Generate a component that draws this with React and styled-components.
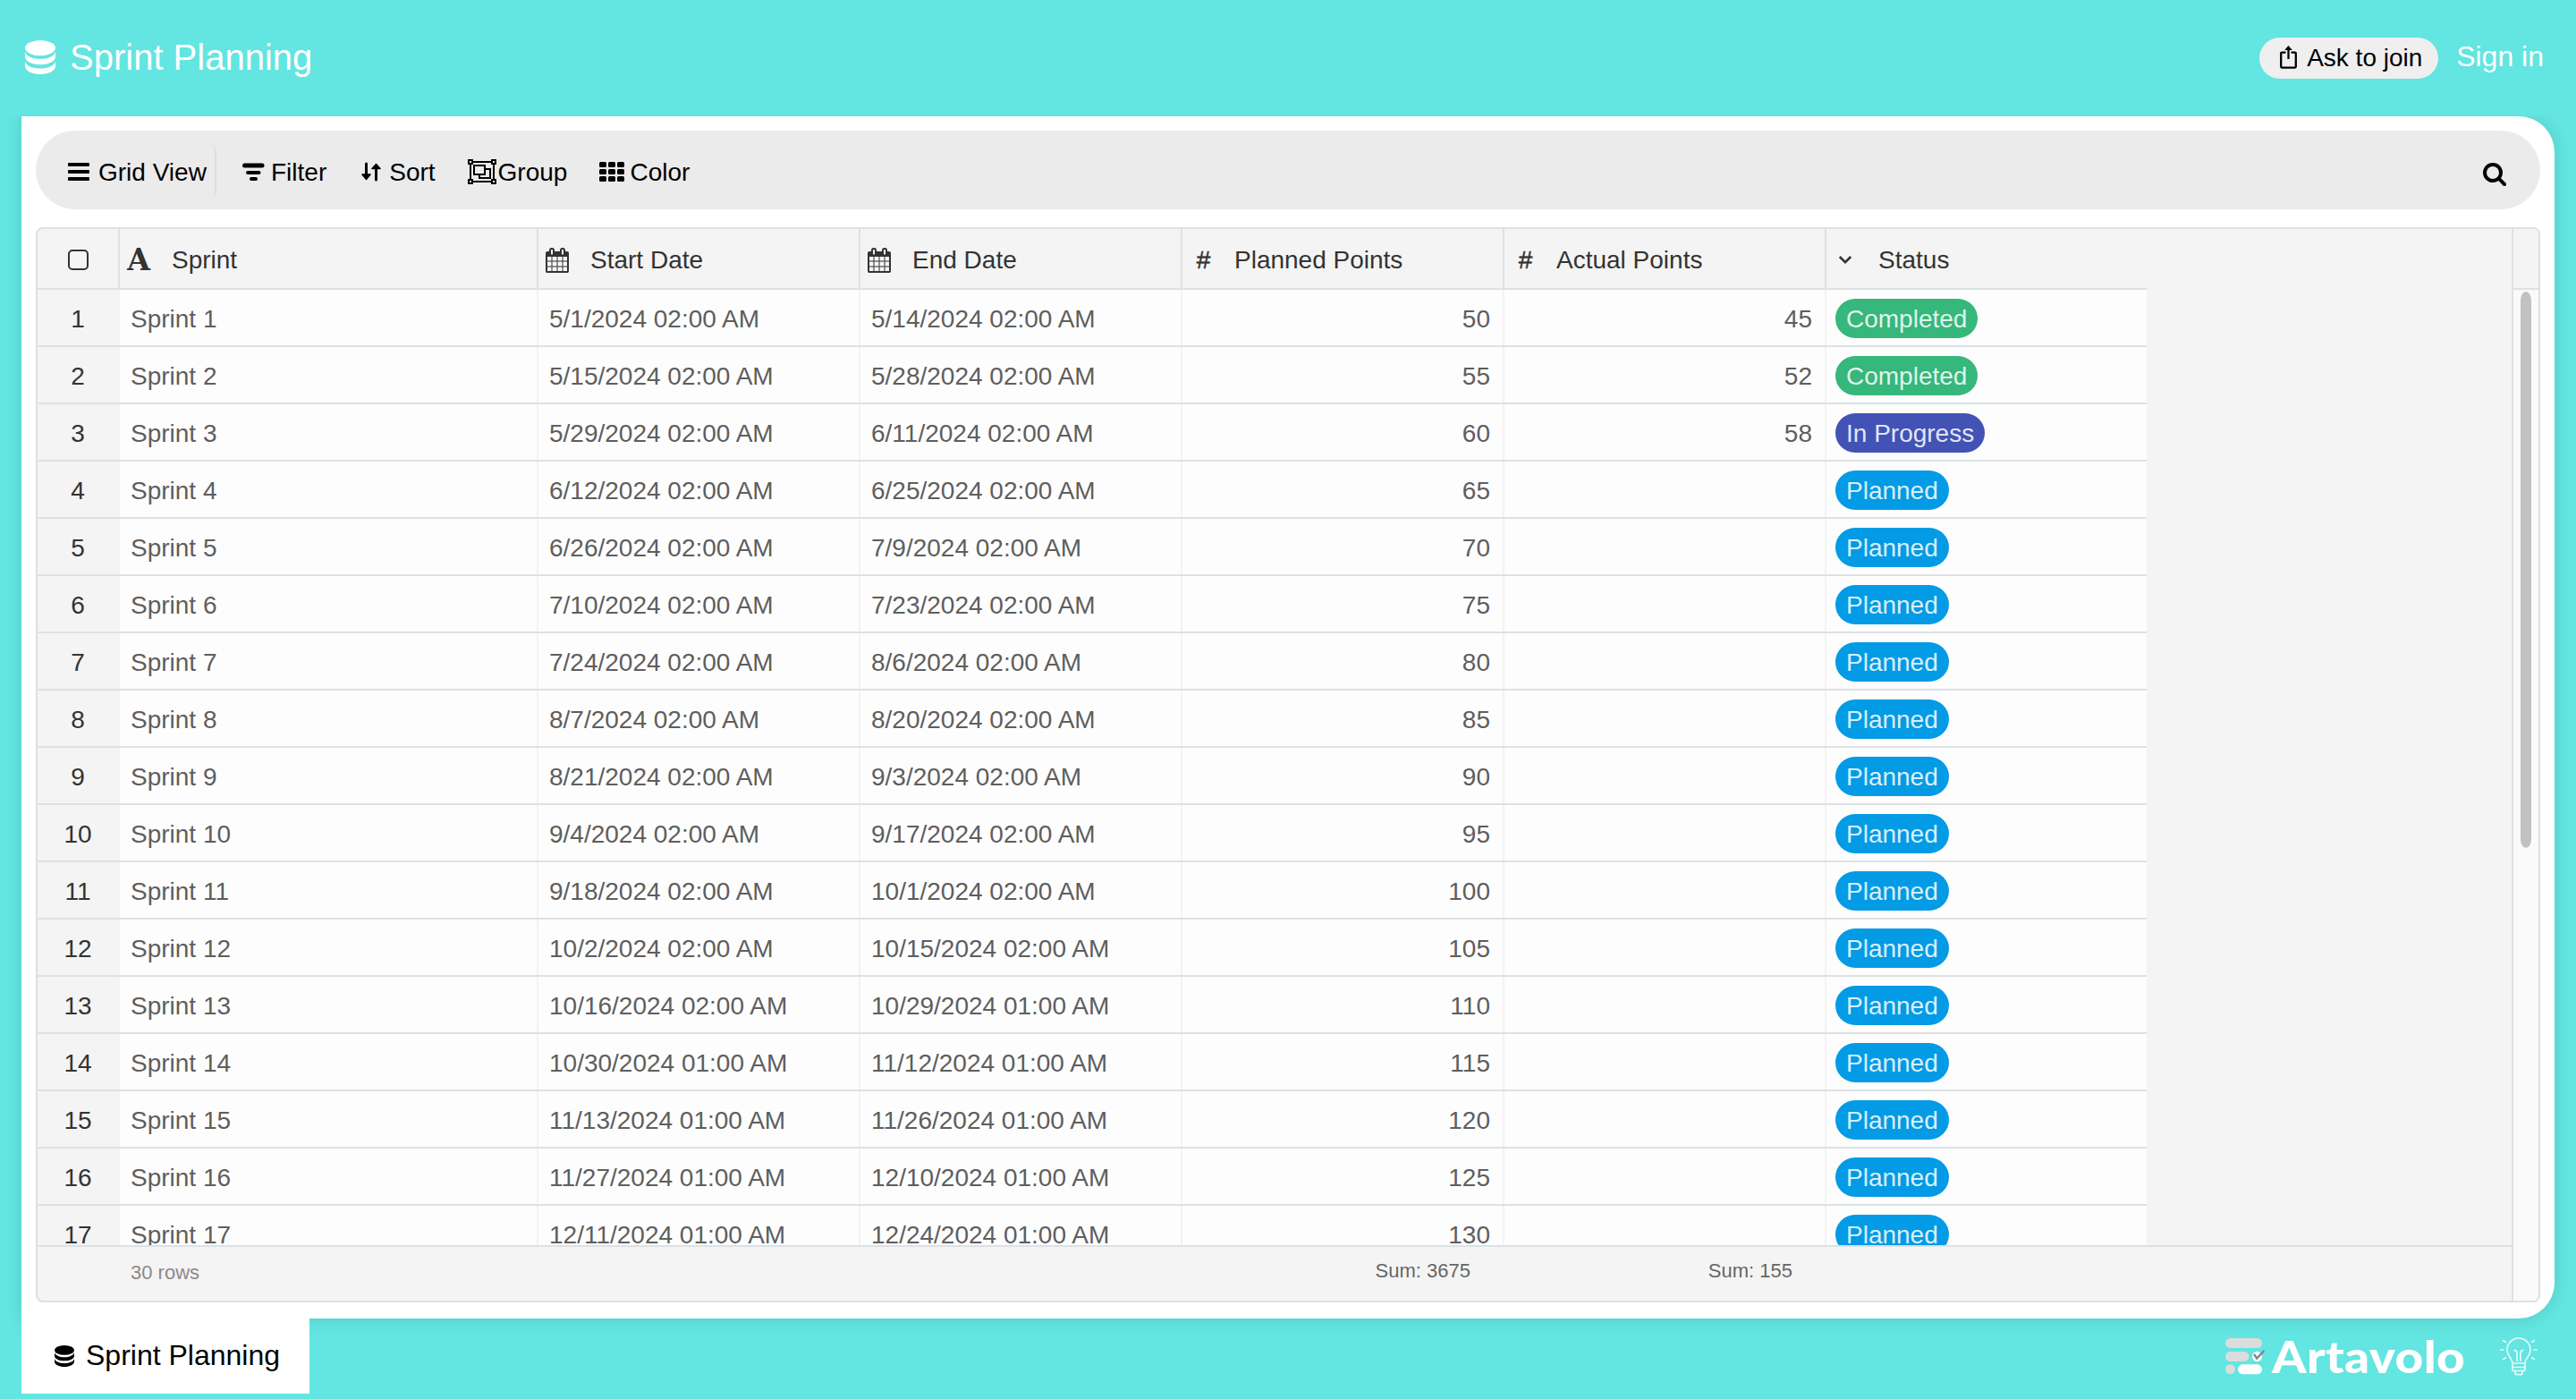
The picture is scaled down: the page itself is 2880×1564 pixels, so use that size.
import React from 'react'

import styled, { createGlobalStyle } from 'styled-components'

const GlobalStyle = createGlobalStyle`
    * {
        box-sizing: border-box;
    }

    body {
        margin: 0;
        overflow: hidden;
        background-color: #63E5E1;
        font-family: "Liberation Sans", Arial, sans-serif;
        font-size: 28px;
    }

    svg {
        display: block;
        flex: none;
    }
`

const StyledPage = styled.div`
    width: 100vw;
    height: 100vh;
    display: flex;
    flex-direction: column;
    background-color: #63E5E1;
`

const StyledHeader = styled.header`
    height: 130px;
    flex: none;
    display: flex;
    align-items: center;
    padding: 0 36px 3px 28px;
    color: #FFF;
    background-color: #63E5E1;
    z-index: 1;
`

const StyledTitle = styled.h1`
    margin: 0 auto 0 16px;
    font-size: 40px;
    font-weight: normal;
    line-height: 46px;
`

const StyledJoinButton = styled.button`
    width: 200px;
    height: 46px;
    margin: 3px 20px 0 0;
    padding: 0 0 0 22px;
    display: flex;
    align-items: center;
    gap: 10px;
    border: 0;
    border-radius: 23px;
    background-color: #EFEFEF;
    color: #000;
    font: inherit;
    white-space: nowrap;
`

const StyledSignIn = styled.a`
    color: #FFF;
    font-size: 32px;
    line-height: 36px;
    padding-bottom: 1px;
`

const StyledPanel = styled.main`
    height: 1344px;
    flex: none;
    margin: 0 24px;
    padding: 16px;
    display: flex;
    flex-direction: column;
    background-color: #FFF;
    border-radius: 0 40px 40px 0;
    box-shadow: 0 0 20px rgba(0, 0, 0, 0.12);
`

const StyledToolbar = styled.div`
    height: 88px;
    flex: none;
    margin-bottom: 20px;
    padding: 4px 38px 0 36px;
    display: flex;
    align-items: center;
    border-radius: 44px;
    background-color: #EBEBEB;
`

const StyledTool = styled.div`
    display: flex;
    align-items: center;
    gap: ${props => props.$gap}px;
    margin-left: ${props => props.$left}px;
    line-height: 32px;
    white-space: nowrap;
`

const StyledViewTool = styled(StyledTool)`
    width: 166px;
    height: 60px;
    border-right: 2px solid #DFDFDF;
    border-radius: 8px;
`

const StyledToolLabel = styled.span`
    padding-top: 2px;
`

const StyledSearch = styled.div`
    margin-left: auto;
    padding-top: 6px;
`

const StyledGrid = styled.div`
    height: 1202px;
    display: flex;
    overflow: hidden;
    border: 2px solid #DCE1E5;
    border-radius: 8px;
    background-color: #F4F4F4;
`

const StyledGridMain = styled.div`
    flex: 1;
    display: flex;
    flex-direction: column;
`

const StyledColumns = styled.div`
    width: 2358px;
    display: grid;
    grid-template-columns: 92px 468px 360px 360px 360px 360px 358px;
`

const StyledHeadRow = styled(StyledColumns)`
    height: 68px;
    border-bottom: 2px solid #DCE1E5;
    color: #333;
`

const StyledHeadCell = styled.div`
    padding-top: 3px;
    display: flex;
    align-items: center;
    border-right: ${props => props.$last ? '0' : '2px solid #DCE1E5'};
    white-space: nowrap;
`

const StyledCheckAll = styled.span`
    width: 23px;
    height: 23px;
    margin: 0 auto;
    border: 2px solid #333;
    border-radius: 5px;
`

const StyledHeadIcon = styled.span`
    width: ${props => props.$hash ? 47 : 42}px;
    margin-right: ${props => props.$hash ? 11 : 16}px;
    display: flex;
    justify-content: center;
    -webkit-text-stroke: ${props => props.$hash ? '0.5px #333' : '0'};
`

const StyledTextIcon = styled.span`
    font-family: "DejaVu Serif", serif;
    font-size: 33px;
    font-weight: bold;
    line-height: 38px;
`

const StyledBody = styled.div`
    height: 1068px;
    overflow: hidden;
`

const StyledRow = styled(StyledColumns)`
    height: 64px;
    border-bottom: 2px solid #DCE1E5;
    background-color: #FDFDFD;
`

const StyledCell = styled.div`
    padding: ${props => props.$right ? '3px 14px 0' : '3px 12px 0'};
    display: flex;
    align-items: center;
    justify-content: ${props => props.$right ? 'flex-end' : 'flex-start'};
    border-right: 2px solid #F2F2F2;
    color: #5E5E5E;
    white-space: nowrap;
`

const StyledNumberCell = styled(StyledCell)`
    justify-content: center;
    background-color: #F4F4F4;
    border-right-color: #F4F4F4;
    color: #333;
`

const StyledStatusCell = styled(StyledCell)`
    padding: 1px 10px 0;
    border-right: 0;
`

const StyledPill = styled.span`
    height: 44px;
    padding: 1px 12px 0;
    line-height: 44px;
    border-radius: 22px;
    background-color: ${props => props.$color};
    color: rgba(255, 255, 255, 0.87);
`

const StyledFooter = styled(StyledColumns)`
    width: 100%;
    height: 62px;
    border-top: 2px solid #DCE1E5;
    font-size: 22px;
    line-height: 26px;
    color: #666;
`

const StyledRowCount = styled.div`
    grid-column: 2;
    padding: 16px 12px 0;
    color: #8A8A8A;
`

const StyledSum = styled.div`
    grid-column: ${props => props.$column};
    padding: 14px 38px 0 0;
    text-align: right;
`

const StyledScrollColumn = styled.div`
    width: 30px;
    border-left: 2px solid #DCE1E5;
    background-color: #FAFAFA;
`

const StyledScrollHead = styled.div`
    height: 68px;
    border-bottom: 2px solid #DCE1E5;
    background-color: #F4F4F4;
`

const StyledScrollThumb = styled.div`
    width: 12px;
    height: 622px;
    margin: 2px 8px;
    border-radius: 6px / 10px;
    background-color: #C1C1C1;
`

const StyledBottomBar = styled.footer`
    height: 90px;
    padding: 0 43px 6px 24px;
    display: flex;
    align-items: center;
    z-index: 1;
`

const StyledTab = styled.div`
    width: 322px;
    height: 84px;
    padding: 0 0 1px 37px;
    display: flex;
    align-items: center;
    gap: 13px;
    background-color: #FFF;
    color: #000;
    font-size: 32px;
    white-space: nowrap;
`

const StyledBrand = styled.div`
    margin-left: auto;
    display: flex;
    align-items: center;
    gap: 8px;
    margin-right: 40px;
    color: #FFF;
`

const StyledBrandName = styled.span`
    width: 215px;
    font-family: Lato, sans-serif;
    font-size: 50px;
    font-weight: 900;
    line-height: 50px;
    letter-spacing: 0.3px;
    white-space: nowrap;
    transform: scaleX(1.1);
    transform-origin: left;
`

const DatabaseIcon = ({ width, height }) => (
    <svg width={width} height={height} viewBox="0 0 34 38" preserveAspectRatio="none" fill="currentColor">
        <ellipse cx="17" cy="8.6" rx="17" ry="8.6" />
        <path d="M0 13C1.500 17.500 8 21 17 21S32.500 17.500 34 13V18.500C34 23.500 26.500 27.300 17 27.300S0 23.500 0 18.500Z" />
        <path d="M0 24C1.500 28.500 8 31.600 17 31.600S32.500 28.500 34 24V29C34 34 26.500 38 17 38S0 34 0 29Z" />
    </svg>
)

const ShareIcon = () => (
    <svg width="21" height="28" viewBox="0 0 21 28" fill="none" stroke="currentColor" strokeWidth="2.300">
        <path d="M7.500 7.600H3.200Q2.200 7.600 2.200 8.600V23.600Q2.200 24.600 3.200 24.600H17.800Q18.800 24.600 18.800 23.600V8.600Q18.800 7.600 17.800 7.600H13.500" />
        <path d="M10.500 3V15" />
        <path d="M6.200 5L10.500 0L14.800 5Z" fill="currentColor" stroke="none" />
    </svg>
)

const MenuIcon = () => (
    <svg width="24" height="20" viewBox="0 0 24 20">
        {[0, 8, 16].map(y => <rect key={y} y={y} width="24" height="4" rx="1" />)}
    </svg>
)

const FilterIcon = () => (
    <svg width="26" height="20" viewBox="0 0 26 20">
        <rect x="0" y="0.500" width="24.500" height="5" rx="2.500" />
        <rect x="4" y="9" width="16.500" height="4" rx="2" />
        <rect x="8" y="16" width="9" height="4" rx="2" />
    </svg>
)

const SortIcon = () => (
    <svg width="22" height="22" viewBox="0 0 22 22" fill="none" stroke="#000" strokeWidth="3" strokeLinecap="round">
        <path d="M5.500 2V15M16.500 20V7" />
        <path d="M1 14H10L5.500 19.500ZM12 7.500H21L16.500 2.500Z" fill="#000" strokeWidth="1.500" strokeLinejoin="round" />
    </svg>
)

const GroupIcon = () => (
    <svg width="32" height="28" viewBox="0 0 32 28" fill="none" stroke="#000" strokeWidth="2">
        <rect x="3" y="3" width="26" height="22" />
        <rect x="7" y="7" width="12" height="10" />
        <path d="M19 11H25V21H13V17" />
        {[1, 23].map(y => [1, 27].map(x => (
            <rect key={`${x}-${y}`} x={x} y={y} width="4" height="4" fill="#EBEBEB" />
        )))}
    </svg>
)

const ColorIcon = () => (
    <svg width="28" height="22" viewBox="0 0 28 22">
        {[0, 8, 16].map(y => [0, 10, 20].map(x => (
            <rect key={`${x}-${y}`} x={x} y={y} width="8" height="6" rx="1.500" />
        )))}
    </svg>
)

const SearchIcon = () => (
    <svg width="26" height="26" viewBox="64 128 1664 1664">
        <path d="M1216 832q0-185-131.500-316.500t-316.500-131.500-316.500 131.500-131.500 316.500 131.500 316.500 316.500 131.500 316.500-131.500 131.500-316.500zm512 832q0 52-38 90t-90 38q-54 0-90-38l-343-342q-179 124-399 124-143 0-273.500-55.500t-225-150-150-225-55.500-273.500 55.500-273.500 150-225 225-150 273.500-55.500 273.500 55.500 225 150 150 225 55.500 273.500q0 220-124 399l343 343q37 37 37 90z" />
    </svg>
)

const CalendarIcon = () => (
    <svg width="28" height="28" viewBox="0 0 1792 1792" fill="#333">
        <path d="M192 1664h288v-288h-288v288zm352 0h320v-288h-320v288zm-352-352h288v-320h-288v320zm352 0h320v-320h-320v320zm-352-384h288v-288h-288v288zm736 736h320v-288h-320v288zm-384-736h320v-288h-320v288zm768 736h288v-288h-288v288zm-384-352h320v-320h-320v320zm-352-864v-288q0-13-9.500-22.500t-22.500-9.500h-64q-13 0-22.500 9.500t-9.500 22.500v288q0 13 9.500 22.500t22.500 9.500h64q13 0 22.500-9.500t9.500-22.500zm736 864h288v-320h-288v320zm-384-384h320v-288h-320v288zm384 0h288v-288h-288v288zm32-480v-288q0-13-9.500-22.500t-22.500-9.500h-64q-13 0-22.500 9.500t-9.500 22.500v288q0 13 9.500 22.500t22.500 9.500h64q13 0 22.500-9.500t9.500-22.500zm384-64v1280q0 52-38 90t-90 38h-1408q-52 0-90-38t-38-90v-1280q0-52 38-90t90-38h128v-96q0-66 47-113t113-47h64q66 0 113 47t47 113v96h384v-96q0-66 47-113t113-47h64q66 0 113 47t47 113v96h128q52 0 90 38t38 90z" />
    </svg>
)

const ChevronIcon = () => (
    <svg width="16" height="20" viewBox="0 0 16 20" fill="none" stroke="#333" strokeWidth="2.600">
        <path d="M1.800 6L8 12.200L14.200 6" />
    </svg>
)

const BrandIcon = () => (
    <svg width="44" height="41" viewBox="0 0 44 41">
        <rect x="0" y="0" width="41" height="11" rx="5.500" fill="#DCDCDC" />
        <rect x="0" y="15" width="26.500" height="11" rx="5.500" fill="#DCDCDC" />
        <circle cx="35.500" cy="20.500" r="5.500" fill="#FFF" />
        <circle cx="5.500" cy="34.800" r="5.500" fill="#DCDCDC" />
        <rect x="14" y="29.300" width="27" height="11" rx="5.500" fill="#FFF" />
        <path d="M32 18L35.200 22.500L43.300 14" fill="none" stroke="#858585" strokeWidth="2.400" />
    </svg>
)

const BulbIcon = () => (
    <svg width="42" height="43" viewBox="0 0 42 43" fill="none" stroke="#E6FBFA" strokeWidth="1.700">
        <path d="M14 29C14 24 8 21 8 14A13 13 0 0 1 34 14C34 21 28 24 28 29Z" />
        <path d="M19 27V17Q19 14.500 15.500 14.500M23 27V17Q23 14.500 26.500 14.500" />
        <path d="M14 29.500V35.500Q14 37.500 16 37.500H26Q28 37.500 28 35.500V29.500M14 33.500H28M17 38V40Q17 41.700 19 41.700H23Q25 41.700 25 40V38" />
        <path d="M0 14H4.500M37.500 14H42M3 3.200L7 5.700M39 3.200L35 5.700M3 25L7 22.500M39 25L35 22.500" />
    </svg>
)

const statusColors = {
    'Completed': '#36B77B',
    'In Progress': '#4253B5',
    'Planned': '#039BE5'
}

const dates = [
    '5/1/2024 02:00 AM',
    '5/15/2024 02:00 AM',
    '5/29/2024 02:00 AM',
    '6/12/2024 02:00 AM',
    '6/26/2024 02:00 AM',
    '7/10/2024 02:00 AM',
    '7/24/2024 02:00 AM',
    '8/7/2024 02:00 AM',
    '8/21/2024 02:00 AM',
    '9/4/2024 02:00 AM',
    '9/18/2024 02:00 AM',
    '10/2/2024 02:00 AM',
    '10/16/2024 02:00 AM',
    '10/30/2024 01:00 AM',
    '11/13/2024 01:00 AM',
    '11/27/2024 01:00 AM',
    '12/11/2024 01:00 AM'
]

const endDates = [
    '5/14/2024 02:00 AM',
    '5/28/2024 02:00 AM',
    '6/11/2024 02:00 AM',
    '6/25/2024 02:00 AM',
    '7/9/2024 02:00 AM',
    '7/23/2024 02:00 AM',
    '8/6/2024 02:00 AM',
    '8/20/2024 02:00 AM',
    '9/3/2024 02:00 AM',
    '9/17/2024 02:00 AM',
    '10/1/2024 02:00 AM',
    '10/15/2024 02:00 AM',
    '10/29/2024 01:00 AM',
    '11/12/2024 01:00 AM',
    '11/26/2024 01:00 AM',
    '12/10/2024 01:00 AM',
    '12/24/2024 01:00 AM'
]

const actualPoints = [45, 52, 58]
const statuses = ['Completed', 'Completed', 'In Progress']

const sprints = dates.map((start, index) => ({
    id: index + 1,
    name: `Sprint ${index + 1}`,
    start,
    end: endDates[index],
    planned: 50 + index * 5,
    actual: actualPoints[index],
    status: statuses[index] || 'Planned'
}))

const columns = [
    { title: 'Sprint', icon: <StyledTextIcon>A</StyledTextIcon> },
    { title: 'Start Date', icon: <CalendarIcon /> },
    { title: 'End Date', icon: <CalendarIcon /> },
    { title: 'Planned Points', icon: '#' },
    { title: 'Actual Points', icon: '#' },
    { title: 'Status', icon: <ChevronIcon /> }
]

const Toolbar = () => (
    <StyledToolbar>
        <StyledViewTool $gap={10} $left={0}>
            <MenuIcon />
            <StyledToolLabel>Grid View</StyledToolLabel>
        </StyledViewTool>
        <StyledTool $gap={6} $left={29}>
            <FilterIcon />
            <StyledToolLabel>Filter</StyledToolLabel>
        </StyledTool>
        <StyledTool $gap={9} $left={39}>
            <SortIcon />
            <StyledToolLabel>Sort</StyledToolLabel>
        </StyledTool>
        <StyledTool $gap={2} $left={36}>
            <GroupIcon />
            <StyledToolLabel>Group</StyledToolLabel>
        </StyledTool>
        <StyledTool $gap={6} $left={36}>
            <ColorIcon />
            <StyledToolLabel>Color</StyledToolLabel>
        </StyledTool>
        <StyledSearch><SearchIcon /></StyledSearch>
    </StyledToolbar>
)

const Grid = () => (
    <StyledGrid>
        <StyledGridMain>
            <StyledHeadRow>
                <StyledHeadCell><StyledCheckAll /></StyledHeadCell>
                {columns.map((column, index) =>
                    <StyledHeadCell key={column.title} $last={index === columns.length - 1}>
                        <StyledHeadIcon $hash={column.icon === '#'}>{column.icon}</StyledHeadIcon>
                        {column.title}
                    </StyledHeadCell>
                )}
            </StyledHeadRow>
            <StyledBody>
                {sprints.map(sprint =>
                    <StyledRow key={sprint.id}>
                        <StyledNumberCell>{sprint.id}</StyledNumberCell>
                        <StyledCell>{sprint.name}</StyledCell>
                        <StyledCell>{sprint.start}</StyledCell>
                        <StyledCell>{sprint.end}</StyledCell>
                        <StyledCell $right>{sprint.planned}</StyledCell>
                        <StyledCell $right>{sprint.actual}</StyledCell>
                        <StyledStatusCell>
                            <StyledPill $color={statusColors[sprint.status]}>{sprint.status}</StyledPill>
                        </StyledStatusCell>
                    </StyledRow>
                )}
            </StyledBody>
            <StyledFooter>
                <StyledRowCount>30 rows</StyledRowCount>
                <StyledSum $column={5}>Sum: 3675</StyledSum>
                <StyledSum $column={6}>Sum: 155</StyledSum>
            </StyledFooter>
        </StyledGridMain>
        <StyledScrollColumn>
            <StyledScrollHead />
            <StyledScrollThumb />
        </StyledScrollColumn>
    </StyledGrid>
)

export default function App() {
    return (
        <StyledPage>
            <GlobalStyle />
            <StyledHeader>
                <DatabaseIcon width={34} height={38} />
                <StyledTitle>Sprint Planning</StyledTitle>
                <StyledJoinButton><ShareIcon />Ask to join</StyledJoinButton>
                <StyledSignIn>Sign in</StyledSignIn>
            </StyledHeader>
            <StyledPanel>
                <Toolbar />
                <Grid />
            </StyledPanel>
            <StyledBottomBar>
                <StyledTab><DatabaseIcon width={22} height={24} />Sprint Planning</StyledTab>
                <StyledBrand>
                    <BrandIcon />
                    <StyledBrandName>Artavolo</StyledBrandName>
                </StyledBrand>
                <BulbIcon />
            </StyledBottomBar>
        </StyledPage>
    )
}
